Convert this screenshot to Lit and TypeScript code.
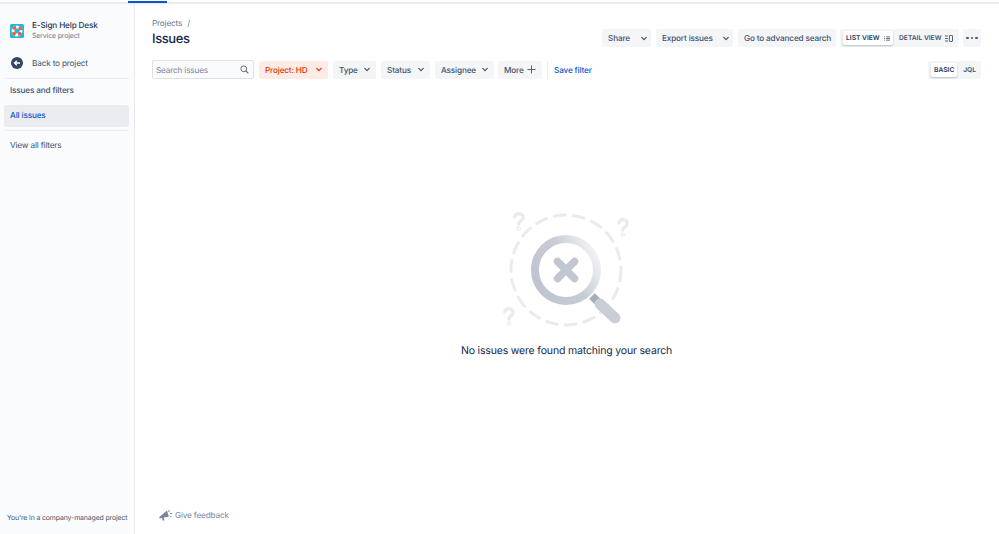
import { LitElement, html, css, svg } from 'lit';
import { customElement } from 'lit/decorators.js';

const chevron = html`<svg class="chev" viewBox="0 0 8 6" width="6" height="5"><path d="M1 1.5l3 3 3-3" fill="none" stroke="currentColor" stroke-width="1.6" stroke-linecap="round" stroke-linejoin="round"></path></svg>`;

const question = (x: number, y: number) => svg`
  <g transform="translate(${x} ${y})" fill="none" stroke="#e9ebee" stroke-width="3.4" stroke-linecap="round">
    <path d="M1.8 5C1.8 2.8 3.6 1.7 5.8 1.7s4.4 1.4 4.4 3.8c0 3.4-4.4 3.2-4.4 6.6"></path>
    <circle cx="5.8" cy="16.6" r="0.5" fill="#e9ebee"></circle>
  </g>`;

@customElement('app-root')
export class AppRoot extends LitElement {
  static styles = css`
    :host {
      display: block;
      width: 999px;
      height: 534px;
      overflow: hidden;
      font-family: Inter, "Liberation Sans", sans-serif;
      text-rendering: geometricPrecision;
      letter-spacing: -0.16px;
      color: #344563;
      background: #fff;
    }
    .line {
      height: 3px;
      margin-top: 1px;
      background: linear-gradient(transparent 1px, #ebecf0 1px);
      display: flex;
      padding-left: 128px;
    }
    .line i {
      display: block;
      width: 39px;
      height: 2px;
      background: #0c55cc;
    }
    .page {
      display: flex;
      height: 530px;
    }
    .side {
      flex: none;
      box-sizing: content-box;
      width: 125px;
      background: #fafbfc;
      border-right: 1px solid #ebecf0;
      display: flex;
      flex-direction: column;
      padding: 0 5px 0 4px;
    }
    .proj {
      display: flex;
      align-items: center;
      gap: 8px;
      padding: 13px 0 0 6px;
      height: 27px;
    }
    .proj b {
      display: block;
      font-size: 8.2px;
      font-weight: 500;
      line-height: 11px;
      color: #253858;
    }
    .proj span {
      display: block;
      font-size: 7px;
      line-height: 10px;
      color: #6b778c;
    }
    .back {
      display: flex;
      align-items: center;
      gap: 9px;
      height: 20px;
      padding-left: 7px;
      margin-top: 9px;
      font-size: 8.2px;
      color: #42526e;
    }
    .rule {
      height: 1px;
      background: #ebecf0;
    }
    .back + .rule {
      margin: 5px 0 0 1px;
    }
    .head {
      font-size: 8.2px;
      font-weight: 500;
      color: #42526e;
      line-height: 12px;
      padding: 5px 0 0 6px;
      height: 21px;
    }
    .item {
      height: 22px;
      line-height: 21px;
      font-size: 8.2px;
      font-weight: 500;
      color: #0c55cc;
      background: #ebecf0;
      border-radius: 2px;
      padding-left: 6px;
      margin-bottom: 3px;
    }
    .item + .rule {
      margin-left: 1px;
    }
    .all {
      font-size: 8.2px;
      color: #42526e;
      line-height: 12px;
      padding: 8px 0 0 6px;
    }
    .foot {
      margin-top: auto;
      font-size: 6.9px;
      letter-spacing: -0.11px;
      color: #42526e;
      padding: 0 0 12px 3px;
      white-space: nowrap;
    }
    .main {
      flex: 1;
      display: flex;
      flex-direction: column;
      padding: 0 18px 0 17px;
      min-width: 0;
    }
    .top {
      display: flex;
      justify-content: space-between;
      height: 43px;
      margin-bottom: 13px;
    }
    .crumb {
      font-size: 8.2px;
      line-height: 12px;
      color: #6b778c;
      padding-top: 13px;
    }
    .crumb em {
      font-style: normal;
      margin-left: 3px;
    }
    h1 {
      margin: 0;
      font-size: 13px;
      letter-spacing: -0.4px;
      line-height: 20px;
      font-weight: 500;
      color: #172b4d;
    }
    .actions {
      display: flex;
      gap: 5px;
      padding-top: 25px;
    }
    .btn {
      display: flex;
      align-items: center;
      justify-content: space-between;
      box-sizing: border-box;
      height: 18px;
      padding: 0 6px;
      border-radius: 2px;
      background: #f4f5f7;
      font-size: 8.2px;
      font-weight: 500;
      color: #42526e;
      white-space: nowrap;
    }
    .actions .btn {
      padding-right: 4px;
    }
    .seg {
      display: flex;
      align-items: center;
      justify-content: space-between;
      box-sizing: border-box;
      height: 18px;
      border-radius: 2px;
      background: #f4f5f7;
      padding: 0 2px 0 3px;
      font-size: 6.7px;
      font-weight: 600;
      letter-spacing: 0;
      color: #42526e;
    }
    .actions .seg {
      margin-left: -1px;
    }
    .seg span {
      display: flex;
      align-items: center;
      justify-content: space-between;
      box-sizing: border-box;
      height: 14px;
      padding: 0 3px;
      white-space: nowrap;
    }
    .seg .on {
      background: #fff;
      border-radius: 2px;
      box-shadow: 0 1px 2px rgba(9, 30, 66, 0.25);
      color: #253858;
    }
    .seg .list {
      width: 50px;
    }
    .seg .detail {
      width: 61px;
      padding-right: 4px;
    }
    .seg .basic {
      width: 26px;
    }
    .actions .dots {
      justify-content: center;
      gap: 2px;
      padding: 0;
      width: 18px;
      margin-left: -1px;
    }
    .dots i {
      width: 2.4px;
      height: 2.4px;
      border-radius: 50%;
      background: #42526e;
    }
    .filters {
      display: flex;
      align-items: center;
      gap: 5px;
    }
    .search {
      box-sizing: border-box;
      width: 102px;
      height: 19px;
      border: 1.5px solid #dfe1e6;
      border-radius: 2px;
      background: #fafbfc;
      display: flex;
      align-items: center;
      justify-content: space-between;
      padding: 0 4px 0 3px;
      font-size: 8.2px;
      color: #7a869a;
    }
    .red {
      background: #ffebe6;
      color: #de350b;
    }
    .more {
      margin-left: -1px;
    }
    .rule-v {
      width: 1px;
      height: 18px;
      background: #ebecf0;
    }
    .save {
      font-size: 8.2px;
      font-weight: 500;
      color: #0c55cc;
      margin-left: 1px;
    }
    .spacer {
      flex: 1;
    }
    .empty {
      display: flex;
      flex-direction: column;
      align-items: center;
      padding-top: 133px;
    }
    .empty p {
      margin: 13px 0 0;
      font-size: 10.5px;
      letter-spacing: -0.17px;
      line-height: 16px;
      color: #172b4d;
    }
    .feedback {
      margin-top: auto;
      display: flex;
      align-items: center;
      gap: 2px;
      padding: 0 0 13px 7px;
      font-size: 8.2px;
      color: #7a869a;
    }
  `;

  render() {
    return html`
      <div class="line"><i></i></div>
      <div class="page">
        <aside class="side">
          <div class="proj">
            <svg width="14" height="14" viewBox="0 0 14 14">
              <rect width="14" height="14" rx="1.5" fill="#1fb8dc"></rect>
              <circle cx="7" cy="7" r="4" fill="none" stroke="#fff" stroke-width="3"></circle>
              <circle cx="7" cy="7" r="4" fill="none" stroke="#ef5a3c" stroke-width="3" stroke-dasharray="3.4 2.88" stroke-dashoffset="-1.44"></circle>
            </svg>
            <div><b>E-Sign Help Desk</b><span>Service project</span></div>
          </div>
          <div class="back">
            <svg width="12" height="12" viewBox="0 0 12 12">
              <circle cx="6" cy="6" r="6" fill="#344563"></circle>
              <path d="M9 6H3.8M5.8 3.8L3.5 6l2.3 2.2" fill="none" stroke="#fff" stroke-width="1.3"></path>
            </svg>
            Back to project
          </div>
          <div class="rule"></div>
          <div class="head">Issues and filters</div>
          <div class="item">All issues</div>
          <div class="rule"></div>
          <div class="all">View all filters</div>
          <div class="foot">You're in a company-managed project</div>
        </aside>
        <main class="main">
          <div class="top">
            <div>
              <div class="crumb">Projects <em>/</em></div>
              <h1>Issues</h1>
            </div>
            <div class="actions">
              <div class="btn" style="width:49px">Share ${chevron}</div>
              <div class="btn" style="width:77px">Export issues ${chevron}</div>
              <div class="btn" style="width:98px">Go to advanced search</div>
              <div class="seg" style="width:119px">
                <span class="on list">LIST VIEW
                  <svg width="6" height="5" viewBox="0 0 7 6"><path d="M0 1h1M0 3h1M0 5h1M2.5 1H7M2.5 3H7M2.5 5H7" stroke="#42526e"></path></svg>
                </span>
                <span class="detail">DETAIL VIEW
                  <svg width="8" height="7" viewBox="0 0 8 7"><path d="M0 1h3M0 3.5h3M0 6h3" stroke="#42526e" stroke-width=".9"></path><rect x="4.4" y=".5" width="3.1" height="6" rx=".5" fill="none" stroke="#42526e" stroke-width=".9"></rect></svg>
                </span>
              </div>
              <div class="btn dots"><i></i><i></i><i></i></div>
            </div>
          </div>
          <div class="filters">
            <div class="search">Search issues
              <svg width="9" height="9" viewBox="0 0 9 9"><circle cx="3.8" cy="3.8" r="2.9" fill="none" stroke="#5e6c84" stroke-width="1"></circle><path d="M6 6l2.4 2.4" stroke="#5e6c84" stroke-width="1.1"></path></svg>
            </div>
            <div class="btn red" style="width:69px">Project: HD ${chevron}</div>
            <div class="btn" style="width:43px">Type ${chevron}</div>
            <div class="btn" style="width:49px">Status ${chevron}</div>
            <div class="btn" style="width:59px">Assignee ${chevron}</div>
            <div class="btn more" style="width:44px">More
              <svg width="9" height="9" viewBox="0 0 9 9"><path d="M4.5 .5v8M.5 4.5h8" stroke="#42526e" stroke-width=".9"></path></svg>
            </div>
            <div class="rule-v"></div>
            <div class="save">Save filter</div>
            <div class="spacer"></div>
            <div class="seg" style="width:53px">
              <span class="on basic">BASIC</span><span>JQL</span>
            </div>
          </div>
          <div class="empty">
            <svg width="130" height="118" viewBox="0 0 130 118">
              <defs>
                <linearGradient id="lens" x1="0" y1="0.8" x2="1" y2="0.25">
                  <stop offset="0" stop-color="#bfc5cf"></stop>
                  <stop offset="0.55" stop-color="#c6cbd4"></stop>
                  <stop offset="1" stop-color="#f1f2f4"></stop>
                </linearGradient>
              </defs>
              <circle cx="64" cy="58" r="55" fill="none" stroke="#e9ebee" stroke-width="3" stroke-dasharray="11 8" stroke-linecap="round"></circle>
              ${question(11, 0)}
              ${question(115, 6)}
              ${question(1, 95)}
              <path d="M90 84l6 6" stroke="#a5adba" stroke-width="8"></path>
              <path d="M98 92l15 14" stroke="#c9ced6" stroke-width="11" stroke-linecap="round"></path>
              <circle cx="64" cy="58" r="31" fill="none" stroke="url(#lens)" stroke-width="8"></circle>
              <path d="M55.5 49.5l17 17M72.5 49.5l-17 17" stroke="#c1c7d0" stroke-width="7.5" stroke-linecap="round"></path>
            </svg>
            <p>No issues were found matching your search</p>
          </div>
          <div class="feedback">
            <svg width="14" height="12" viewBox="0 0 14 12">
              <path d="M0 8.2L8 1.5l1.8 6.2-5 .8.6 3H3.6L3 8.8l-1.8.6z" fill="#7a869a"></path>
              <path d="M10.4 1l-.8 2M11 4.6h2.4M10.8 7l1.6.9" stroke="#7a869a" stroke-width="1"></path>
            </svg>
            Give feedback
          </div>
        </main>
      </div>
    `;
  }
}
